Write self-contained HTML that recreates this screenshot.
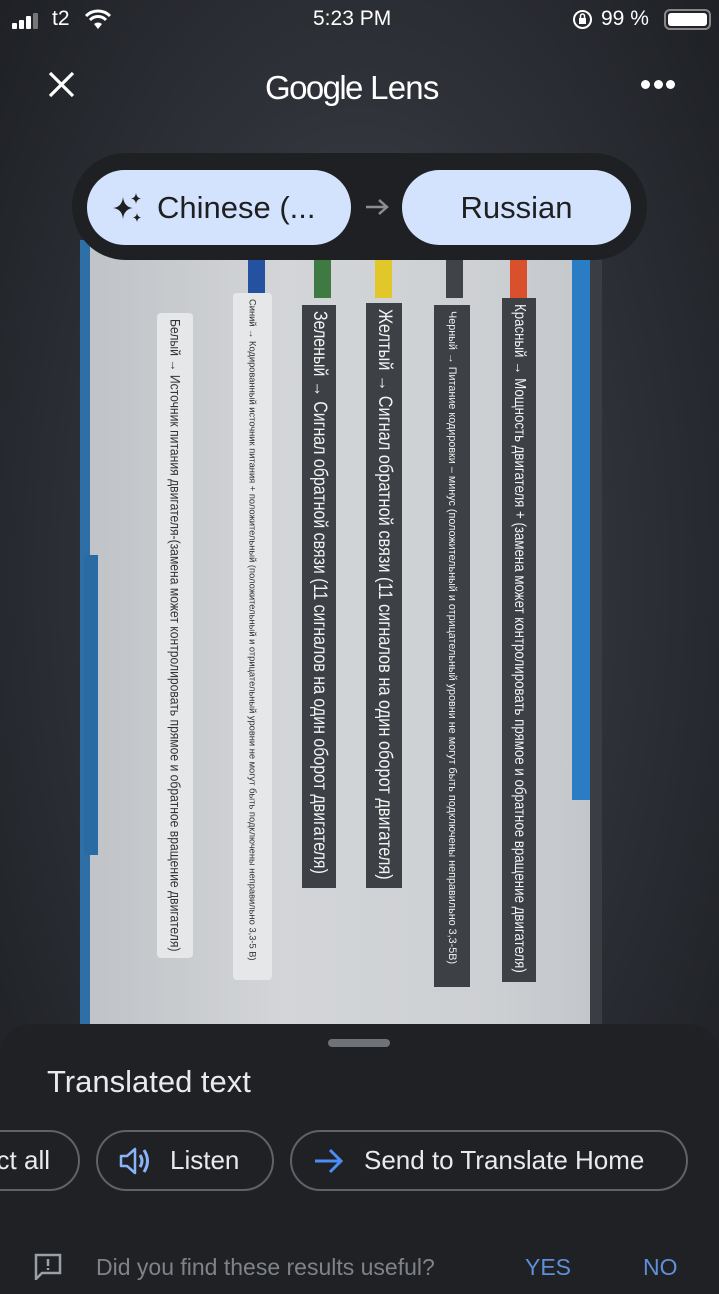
<!DOCTYPE html>
<html><head><meta charset="utf-8">
<style>
*{margin:0;padding:0;box-sizing:border-box}
body{width:719px;height:1280px;overflow:hidden;position:relative;font-family:"Liberation Sans","DejaVu Sans",sans-serif;background:radial-gradient(ellipse at 50% 45%,#4a4d54 0%,#2e3137 50%,#1b1d22 100%);}
.abs{position:absolute}
.sb{color:#fff;font-size:21px}
.paper{left:80px;top:240px;width:512px;height:790px;background:linear-gradient(90deg,#bfc2c6,#d3d5d8 40%,#cdd0d3 80%,#c3c6ca);}
.vt{position:absolute;overflow:hidden;padding-top:6px;display:flex;justify-content:center}
.vt span{writing-mode:vertical-rl;white-space:nowrap;display:inline-block;transform-origin:50% 0}
.dk{background:#3d4045;color:#f2f2f2}
.lt{background:#e6e7e8;color:#333;border-radius:4px}
.strip{position:absolute;top:260px;width:17px;height:38px}
.pill{position:absolute;top:170px;height:75px;border-radius:38px;background:#d3e3fd;color:#1f1f1f;font-size:31px;display:flex;align-items:center;justify-content:center}
.btn{position:absolute;top:1130px;height:61px;border:2px solid #5f6368;border-radius:31px;color:#e8eaed;font-size:26px;display:flex;align-items:center}
</style></head><body>
<div class="abs" style="left:12px;top:13px;width:30px;height:16px">
 <div class="abs" style="left:0;top:10px;width:5px;height:6px;background:#fff;border-radius:1px"></div>
 <div class="abs" style="left:7px;top:7px;width:5px;height:9px;background:#fff;border-radius:1px"></div>
 <div class="abs" style="left:14px;top:3px;width:5px;height:13px;background:#fff;border-radius:1px"></div>
 <div class="abs" style="left:21px;top:0;width:5px;height:16px;background:#777;border-radius:1px"></div>
</div>
<div class="abs sb" style="left:52px;top:7px">t2</div>
<svg class="abs" style="left:84px;top:9px" width="28" height="21" viewBox="0 0 28 21"><path d="M2 7a17 17 0 0 1 24 0" stroke="#fff" stroke-width="3" fill="none"/><path d="M6 11a11 11 0 0 1 16 0" stroke="#fff" stroke-width="3" fill="none"/><path d="M14 20l-4-5a6 6 0 0 1 8 0z" fill="#fff"/></svg>
<div class="abs sb" style="left:313px;top:7px">5:23 PM</div>
<svg class="abs" style="left:572px;top:9px" width="21" height="21" viewBox="0 0 21 21"><circle cx="10.5" cy="10.5" r="8.5" stroke="#fff" stroke-width="2" fill="none"/><rect x="7" y="9" width="7" height="6" fill="#fff"/><path d="M8.5 9V7a2 2 0 0 1 4 0v2" stroke="#fff" stroke-width="1.5" fill="none"/></svg>
<div class="abs sb" style="left:601px;top:7px">99 %</div>
<div class="abs" style="left:664px;top:9px;width:47px;height:21px;border:2px solid #888;border-radius:6px;padding:2px"><div style="width:100%;height:100%;background:#fff;border-radius:3px"></div></div>
<svg class="abs" style="left:48px;top:71px" width="27" height="27" viewBox="0 0 27 27"><path d="M2 2L25 25M25 2L2 25" stroke="#fff" stroke-width="3.2"/></svg>
<div class="abs" style="left:265px;top:69px;color:#fff;font-size:33px;letter-spacing:-0.8px"><span style="letter-spacing:-1.6px">Google</span> Lens</div>
<div class="abs" style="left:641px;top:80px;width:34px;height:10px;display:flex;justify-content:space-between"><i style="width:9px;height:9px;border-radius:50%;background:#fff"></i><i style="width:9px;height:9px;border-radius:50%;background:#fff"></i><i style="width:9px;height:9px;border-radius:50%;background:#fff"></i></div>
<div class="abs paper"></div>
<div class="abs" style="left:80px;top:240px;width:10px;height:790px;background:#2f6fa8"></div>
<div class="abs" style="left:84px;top:555px;width:14px;height:300px;background:#2a6aa5"></div>
<div class="abs" style="left:572px;top:240px;width:18px;height:560px;background:#2a7dc4"></div>
<div class="abs" style="left:590px;top:240px;width:12px;height:790px;background:#3a3d42"></div>
<div class="strip" style="left:248px;background:#2452a0"></div>
<div class="strip" style="left:314px;background:#3f7a42"></div>
<div class="strip" style="left:375px;background:#e2c72b"></div>
<div class="strip" style="left:446px;background:#404348"></div>
<div class="strip" style="left:510px;background:#d9512c"></div>
<div class="vt dk" style="left:502px;top:298px;width:34px;height:684px"><span style="font-size:16px;transform:scaleY(0.83)">Красный → Мощность двигателя + (замена может контролировать прямое и обратное вращение двигателя)</span></div>
<div class="vt dk" style="left:434px;top:305px;width:36px;height:682px"><span style="font-size:10.8px;transform:scaleY(1.0)">Черный → Питание кодировки – минус (положительный и отрицательный уровни не могут быть подключены неправильно 3,3-5В)</span></div>
<div class="vt dk" style="left:366px;top:303px;width:36px;height:585px"><span style="font-size:19px;transform:scaleY(0.86)">Желтый → Сигнал обратной связи (11 сигналов на один оборот двигателя)</span></div>
<div class="vt dk" style="left:302px;top:305px;width:34px;height:583px"><span style="font-size:19px;transform:scaleY(0.84)">Зеленый → Сигнал обратной связи (11 сигналов на один оборот двигателя)</span></div>
<div class="vt lt" style="left:233px;top:293px;width:39px;height:687px"><span style="font-size:8.8px;transform:scaleY(1.06)">Синий → Кодированный источник питания + положительный (положительный и отрицательный уровни не могут быть подключены неправильно 3,3-5 В)</span></div>
<div class="vt lt" style="left:157px;top:313px;width:36px;height:645px"><span style="font-size:13.5px;transform:scaleY(0.9)">Белый → Источник питания двигателя-(замена может контролировать прямое и обратное вращение двигателя)</span></div>
<div class="abs" style="left:72px;top:153px;width:575px;height:107px;border-radius:54px;background:#1f2023"></div>
<div class="pill" style="left:87px;width:264px;justify-content:flex-start;padding-left:24px">
<svg width="34" height="34" viewBox="0 0 34 34" style="margin-right:12px"><path d="M12 6Q13 16 22 17Q13 18 12 28Q11 18 2 17Q11 16 12 6Z" fill="#1f1f1f"/><path d="M25 2Q25.6 7 30 7.5Q25.6 8 25 13Q24.4 8 20 7.5Q24.4 7 25 2Z" fill="#1f1f1f"/><path d="M26 22Q26.5 26 30 26.5Q26.5 27 26 31Q25.5 27 22 26.5Q25.5 26 26 22Z" fill="#1f1f1f"/></svg>Chinese (...</div>
<svg class="abs" style="left:364px;top:197px" width="26" height="20" viewBox="0 0 26 20"><path d="M2 10H23M15 3L23 10L15 17" stroke="#8a8d91" stroke-width="2.5" fill="none"/></svg>
<div class="pill" style="left:402px;width:229px">Russian</div>
<div class="abs" style="left:0;top:1024px;width:719px;height:270px;background:#202124;border-radius:30px 30px 0 0"></div>
<div class="abs" style="left:328px;top:1039px;width:62px;height:8px;border-radius:4px;background:#6f7276"></div>
<div class="abs" style="left:47px;top:1064px;color:#e8eaed;font-size:31px">Translated text</div>
<div class="btn" style="left:-40px;width:120px;justify-content:flex-end;padding-right:28px">ct all</div>
<div class="btn" style="left:96px;width:178px;padding-left:20px">
<svg width="36" height="32" viewBox="0 0 36 32" style="margin-right:16px"><path d="M3 11H9L17 4V28L9 21H3Z" stroke="#8ab4f8" stroke-width="2.5" fill="none" stroke-linejoin="round"/><path d="M22 10Q26 16 22 22" stroke="#8ab4f8" stroke-width="3" fill="none"/><path d="M26 5Q33 16 26 27" stroke="#8ab4f8" stroke-width="3" fill="none"/></svg>Listen</div>
<div class="btn" style="left:290px;width:398px;padding-left:20px">
<svg width="34" height="30" viewBox="0 0 34 30" style="margin-right:18px"><path d="M3 15H29M18 4L29 15L18 26" stroke="#4c8df6" stroke-width="3" fill="none"/></svg>Send to Translate Home</div>
<svg class="abs" style="left:33px;top:1252px" width="30" height="28" viewBox="0 0 30 28"><path d="M3 3H27V21H9L3 27Z" stroke="#9aa0a6" stroke-width="2.5" fill="none"/><path d="M15 7V14M15 16V18" stroke="#9aa0a6" stroke-width="2.5"/></svg>
<div class="abs" style="left:96px;top:1254px;color:#7f8388;font-size:23px">Did you find these results useful?</div>
<div class="abs" style="left:525px;top:1254px;color:#5e8fd8;font-size:23px">YES</div>
<div class="abs" style="left:643px;top:1254px;color:#5e8fd8;font-size:23px">NO</div>
</body></html>
